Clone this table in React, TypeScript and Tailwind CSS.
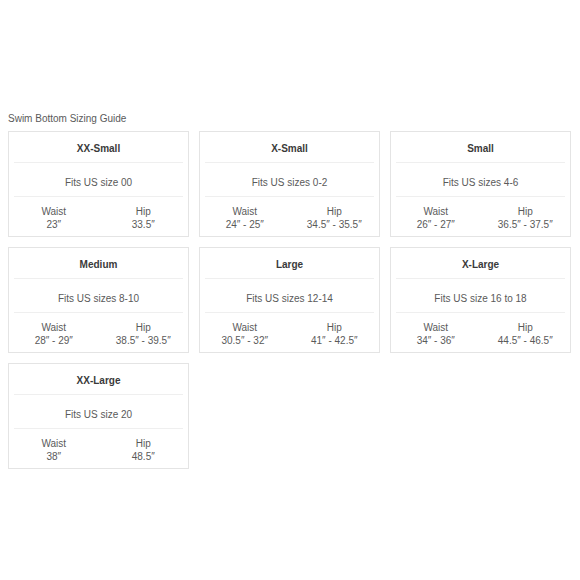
import React from "react";

type Size = { name: string; fits: string; waist: string; hip: string };

const sizes: Size[] = [
  { name: "XX-Small", fits: "Fits US size 00", waist: "23″", hip: "33.5″" },
  { name: "X-Small", fits: "Fits US sizes 0-2", waist: "24″ - 25″", hip: "34.5″ - 35.5″" },
  { name: "Small", fits: "Fits US sizes 4-6", waist: "26″ - 27″", hip: "36.5″ - 37.5″" },
  { name: "Medium", fits: "Fits US sizes 8-10", waist: "28″ - 29″", hip: "38.5″ - 39.5″" },
  { name: "Large", fits: "Fits US sizes 12-14", waist: "30.5″ - 32″", hip: "41″ - 42.5″" },
  { name: "X-Large", fits: "Fits US size 16 to 18", waist: "34″ - 36″", hip: "44.5″ - 46.5″" },
  { name: "XX-Large", fits: "Fits US size 20", waist: "38″", hip: "48.5″" },
];

function Card({ s }: { s: Size }) {
  return (
    <div className="border border-[#e4e4e4] bg-white flex flex-col">
      <div className="h-[30px] pt-[2px] flex items-center justify-center text-[10px] font-semibold text-[#3a3a3a]">
        {s.name}
      </div>
      <div className="mx-[5px] h-px bg-[#efefef]" />
      <div className="h-[33px] pt-[5px] flex items-center justify-center text-[10px] text-[#5a5a5a]">
        {s.fits}
      </div>
      <div className="mx-[5px] h-px bg-[#efefef]" />
      <div className="h-[39px] pt-[8px] grid grid-cols-2 text-[10px] leading-[13px] text-[#5a5a5a]">
        <div className="flex flex-col items-center">
          <span>Waist</span>
          <span>{s.waist}</span>
        </div>
        <div className="flex flex-col items-center">
          <span>Hip</span>
          <span>{s.hip}</span>
        </div>
      </div>
    </div>
  );
}

export default function App() {
  return (
    <div
      className="w-[580px] h-[580px] bg-white pt-[112px] pl-[8px]"
      style={{ fontFamily: '"Liberation Sans", Arial, sans-serif' }}
    >
      <div className="text-[10px] leading-[13px] text-[#5a5a5a] mb-[6px]">Swim Bottom Sizing Guide</div>
      <div className="w-[563px] grid grid-cols-3 gap-[10px]">
        {sizes.map((s) => (
          <Card key={s.name} s={s} />
        ))}
      </div>
    </div>
  );
}
